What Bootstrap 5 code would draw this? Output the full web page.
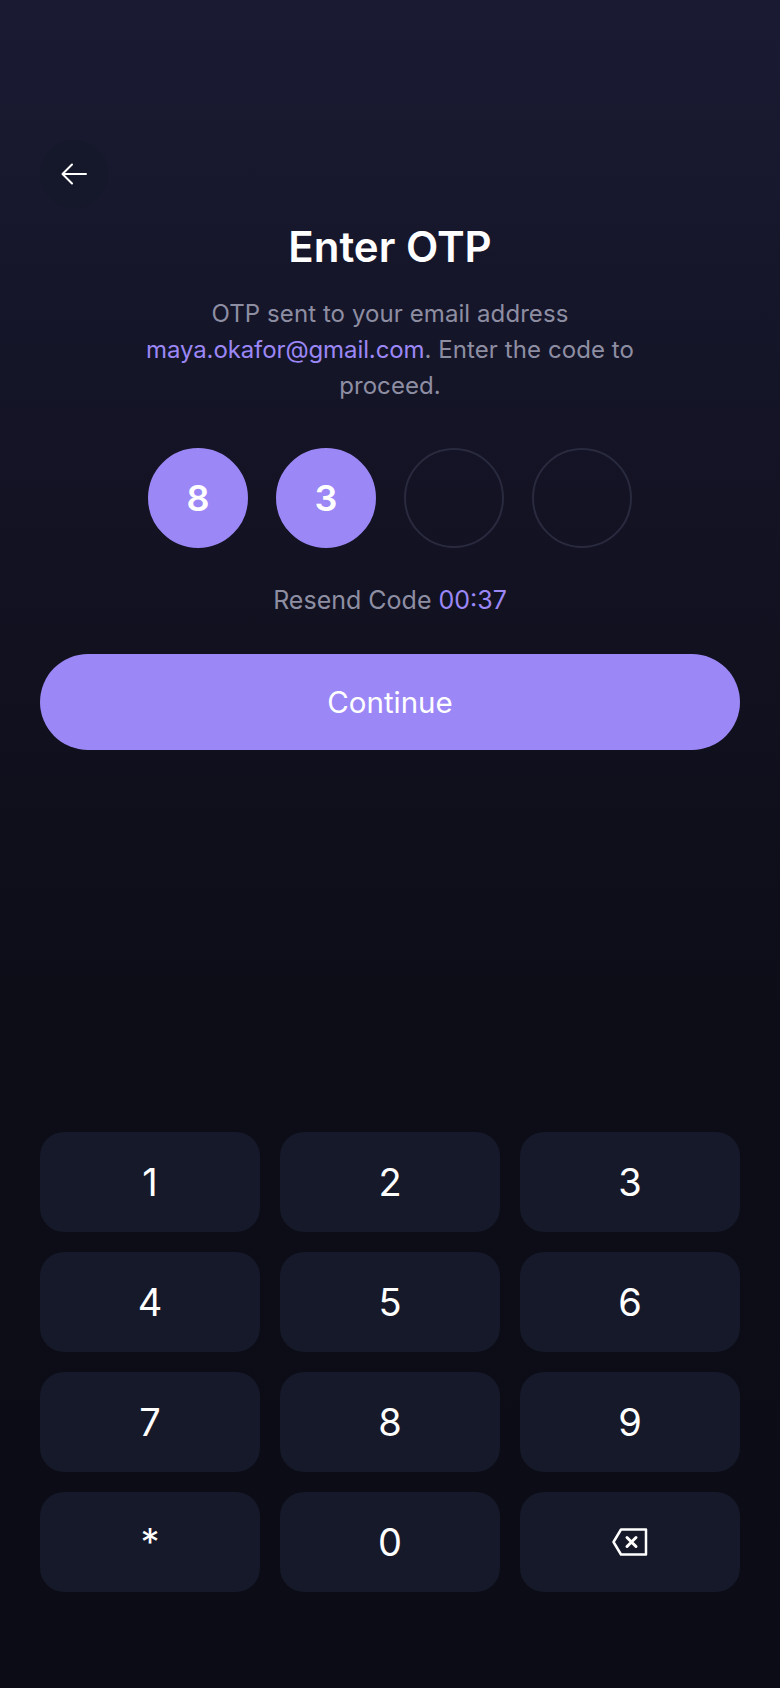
<!DOCTYPE html>
<html lang="en">
<head>
    <meta charset="UTF-8">
    <meta name="viewport" content="width=device-width, initial-scale=1">
    <title>Enter OTP</title>
    <link href="https://cdn.jsdelivr.net/npm/bootstrap@5.3.0/dist/css/bootstrap.min.css" rel="stylesheet">
    <style>
        body {
            background: linear-gradient(180deg, #1a1a33 0%, #111120 38%, #0d0d18 60%, #0c0c16 100%);
            font-family: Inter, "Liberation Sans", sans-serif;
            height: 1688px;
            margin: 0;
            color: #fff;
        }
        .otp-screen {
            height: 1688px;
            padding: 140px 40px 96px;
        }
        .back-btn {
            width: 68px;
            height: 68px;
            background: #15182a;
            border: 0;
            border-radius: 50%;
            padding: 0;
        }
        .otp-title {
            font-size: 42px;
            font-weight: 600;
            line-height: 48px;
            margin: 15px 0 0;
        }
        .otp-text {
            color: #8e8ea3;
            font-size: 24px;
            letter-spacing: .08px;
            line-height: 36px;
            margin: 25px auto 0;
            width: 520px;
        }
        .otp-accent {
            color: #9b87f5;
            letter-spacing: -.1px;
        }
        .otp-row {
            gap: 28px;
            margin-top: 44px;
        }
        .otp-dot {
            width: 100px;
            height: 100px;
            border-radius: 50%;
            border: 2px solid #2a2a3f;
            font-size: 36px;
            font-weight: 600;
        }
        .otp-dot.filled {
            background: #9b87f5;
            border-color: #9b87f5;
        }
        .resend-text {
            color: #8e8ea3;
            font-size: 25px;
            line-height: 36px;
            margin: 34px 0 0;
        }
        .resend-text .otp-accent { letter-spacing: 0; }
        .continue-btn {
            height: 96px;
            border-radius: 48px;
            background: #9b87f5;
            border: 0;
            color: #fff;
            font-size: 29.5px;
            font-weight: 400;
            margin-top: 36px;
        }
        .keypad {
            display: grid;
            grid-template-columns: repeat(3, 220px);
            grid-auto-rows: 100px;
            gap: 20px 20px;
        }
        .key-btn {
            background: #161929;
            border: 0;
            border-radius: 24px;
            color: #fff;
            font-size: 38px;
            font-weight: 400;
            line-height: 1;
            padding: 0;
        }
    </style>
</head>
<body>
<div class="otp-screen d-flex flex-column">
    <button type="button" class="back-btn d-flex align-items-center justify-content-center" aria-label="Back">
        <svg width="28" height="24" viewBox="0 0 28 24" fill="none" stroke="#fff" stroke-width="2" stroke-linecap="round" stroke-linejoin="round">
            <path d="M26 12H2.500M12 2.500L2.500 12l9.500 9.500"/>
        </svg>
    </button>
    <h1 class="otp-title text-center">Enter OTP</h1>
    <p class="otp-text text-center">OTP sent to your email address <span class="otp-accent">maya.okafor@gmail.com</span>. Enter the code to proceed.</p>
    <div class="otp-row d-flex justify-content-center">
        <div class="otp-dot filled d-flex align-items-center justify-content-center">8</div>
        <div class="otp-dot filled d-flex align-items-center justify-content-center">3</div>
        <div class="otp-dot"></div>
        <div class="otp-dot"></div>
    </div>
    <p class="resend-text text-center">Resend Code <span class="otp-accent">00:37</span></p>
    <button type="button" class="btn continue-btn w-100">Continue</button>
    <div class="keypad mt-auto">
        <button type="button" class="key-btn">1</button>
        <button type="button" class="key-btn">2</button>
        <button type="button" class="key-btn">3</button>
        <button type="button" class="key-btn">4</button>
        <button type="button" class="key-btn">5</button>
        <button type="button" class="key-btn">6</button>
        <button type="button" class="key-btn">7</button>
        <button type="button" class="key-btn">8</button>
        <button type="button" class="key-btn">9</button>
        <button type="button" class="key-btn">*</button>
        <button type="button" class="key-btn">0</button>
        <button type="button" class="key-btn d-flex align-items-center justify-content-center" aria-label="Delete">
            <svg width="36" height="28" viewBox="0 0 36 28" fill="none" stroke="#fff" stroke-width="2.500" stroke-linecap="round" stroke-linejoin="round">
                <path d="M9 1.500H34V26.500H9L1.500 14Z"/>
                <path d="M15 9.500l9 9M24 9.500l-9 9" stroke-width="3"/>
            </svg>
        </button>
    </div>
</div>
<script src="https://cdn.jsdelivr.net/npm/bootstrap@5.3.0/dist/js/bootstrap.bundle.min.js"></script>
</body>
</html>
